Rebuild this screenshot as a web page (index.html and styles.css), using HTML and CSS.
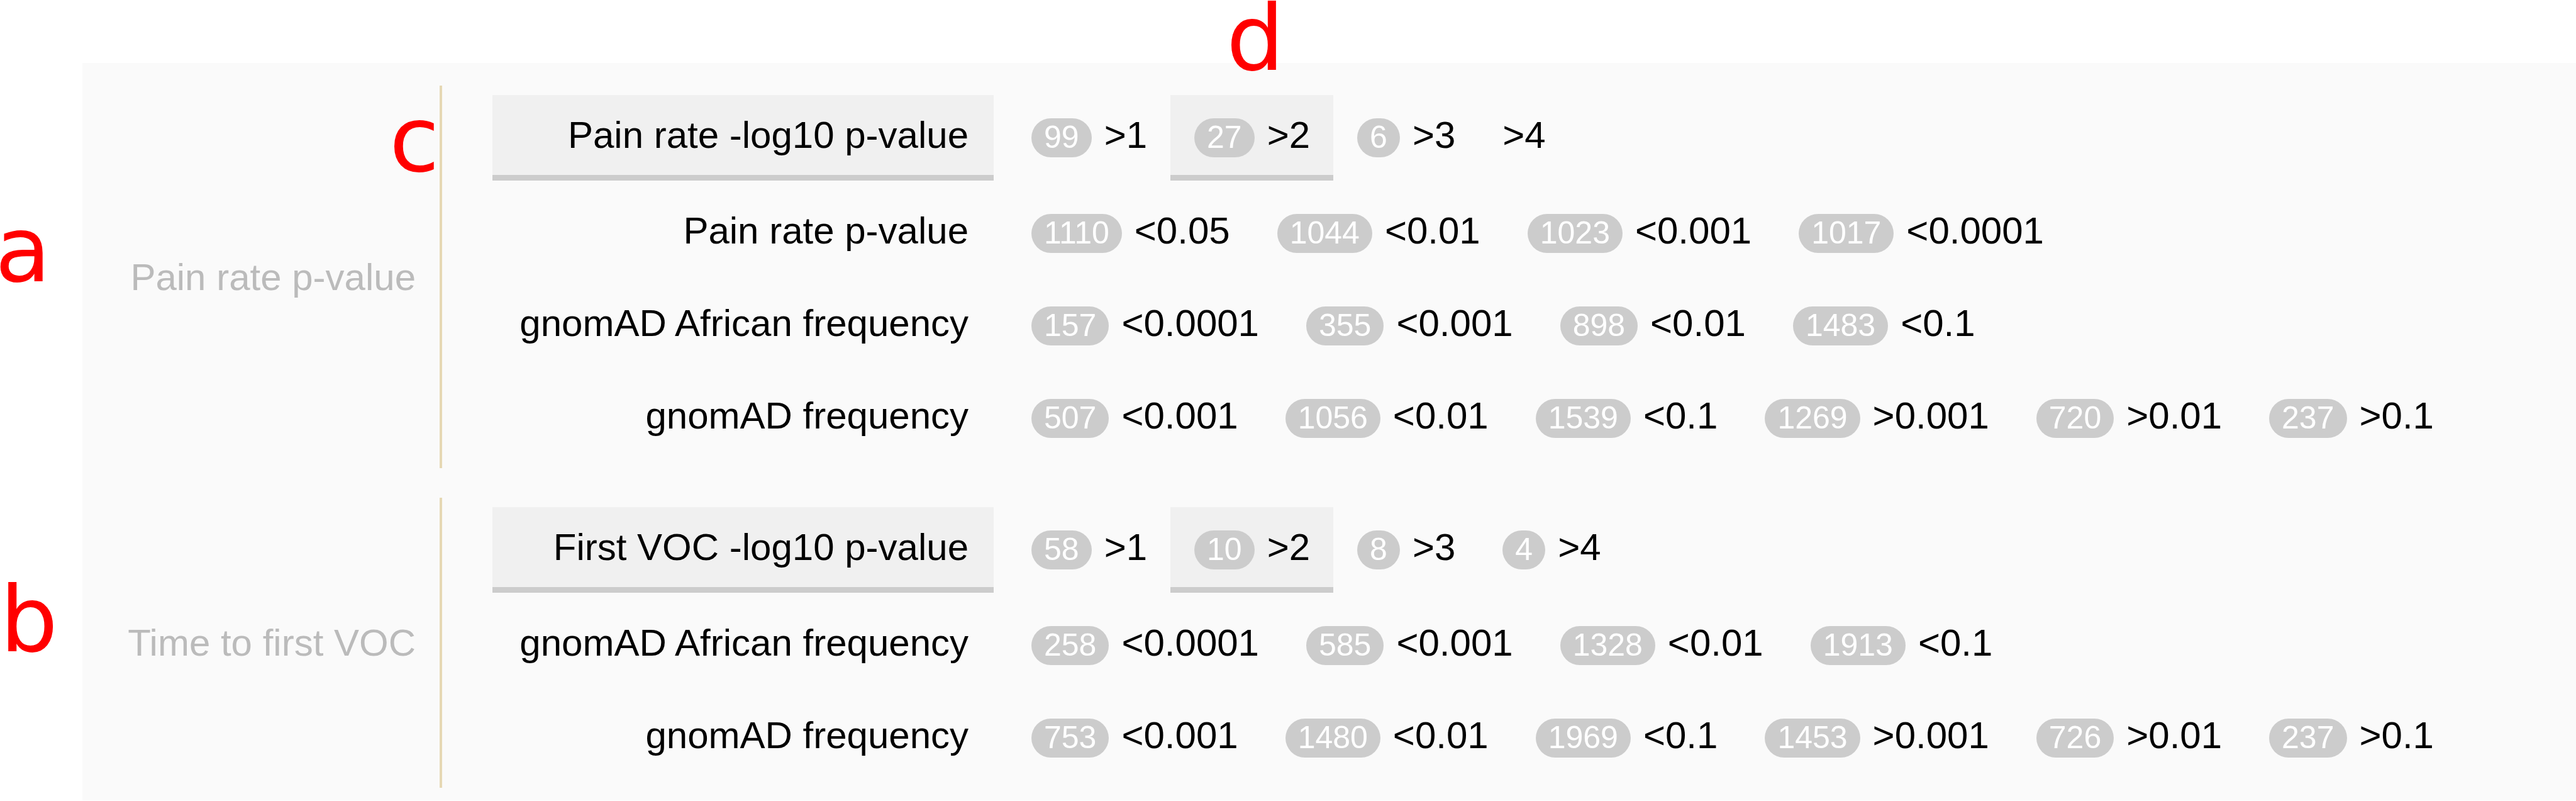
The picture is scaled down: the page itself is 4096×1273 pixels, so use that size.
FILE: index.html
```html
<!DOCTYPE html>
<html lang="en">
<head>
<meta charset="utf-8">
<title>Variant filters</title>
<link rel="stylesheet" href="styles.css">
</head>
<body>
<main class="panel">
  <section class="group">
    <h2 class="group-title">Pain rate p-value</h2>
    <div class="rows">
      <div class="row row-active">
        <span class="row-label">Pain rate -log10 p-value</span>
        <div class="chips">
          <button class="chip"><span class="count">99</span><span>&gt;1</span></button>
          <button class="chip chip-active" aria-pressed="true"><span class="count">27</span><span>&gt;2</span></button>
          <button class="chip"><span class="count">6</span><span>&gt;3</span></button>
          <button class="chip"><span>&gt;4</span></button>
        </div>
      </div>
      <div class="row">
        <span class="row-label">Pain rate p-value</span>
        <div class="chips">
          <button class="chip"><span class="count">1110</span><span>&lt;0.05</span></button>
          <button class="chip"><span class="count">1044</span><span>&lt;0.01</span></button>
          <button class="chip"><span class="count">1023</span><span>&lt;0.001</span></button>
          <button class="chip"><span class="count">1017</span><span>&lt;0.0001</span></button>
        </div>
      </div>
      <div class="row">
        <span class="row-label">gnomAD African frequency</span>
        <div class="chips">
          <button class="chip"><span class="count">157</span><span>&lt;0.0001</span></button>
          <button class="chip"><span class="count">355</span><span>&lt;0.001</span></button>
          <button class="chip"><span class="count">898</span><span>&lt;0.01</span></button>
          <button class="chip"><span class="count">1483</span><span>&lt;0.1</span></button>
        </div>
      </div>
      <div class="row">
        <span class="row-label">gnomAD frequency</span>
        <div class="chips">
          <button class="chip"><span class="count">507</span><span>&lt;0.001</span></button>
          <button class="chip"><span class="count">1056</span><span>&lt;0.01</span></button>
          <button class="chip"><span class="count">1539</span><span>&lt;0.1</span></button>
          <button class="chip"><span class="count">1269</span><span>&gt;0.001</span></button>
          <button class="chip"><span class="count">720</span><span>&gt;0.01</span></button>
          <button class="chip"><span class="count">237</span><span>&gt;0.1</span></button>
        </div>
      </div>
    </div>
  </section>
  <section class="group">
    <h2 class="group-title">Time to first VOC</h2>
    <div class="rows">
      <div class="row row-active">
        <span class="row-label">First VOC -log10 p-value</span>
        <div class="chips">
          <button class="chip"><span class="count">58</span><span>&gt;1</span></button>
          <button class="chip chip-active" aria-pressed="true"><span class="count">10</span><span>&gt;2</span></button>
          <button class="chip"><span class="count">8</span><span>&gt;3</span></button>
          <button class="chip"><span class="count">4</span><span>&gt;4</span></button>
        </div>
      </div>
      <div class="row">
        <span class="row-label">gnomAD African frequency</span>
        <div class="chips">
          <button class="chip"><span class="count">258</span><span>&lt;0.0001</span></button>
          <button class="chip"><span class="count">585</span><span>&lt;0.001</span></button>
          <button class="chip"><span class="count">1328</span><span>&lt;0.01</span></button>
          <button class="chip"><span class="count">1913</span><span>&lt;0.1</span></button>
        </div>
      </div>
      <div class="row">
        <span class="row-label">gnomAD frequency</span>
        <div class="chips">
          <button class="chip"><span class="count">753</span><span>&lt;0.001</span></button>
          <button class="chip"><span class="count">1480</span><span>&lt;0.01</span></button>
          <button class="chip"><span class="count">1969</span><span>&lt;0.1</span></button>
          <button class="chip"><span class="count">1453</span><span>&gt;0.001</span></button>
          <button class="chip"><span class="count">726</span><span>&gt;0.01</span></button>
          <button class="chip"><span class="count">237</span><span>&gt;0.1</span></button>
        </div>
      </div>
    </div>
  </section>
</main>
<span class="note note-a">a</span>
<span class="note note-b">b</span>
<span class="note note-c">c</span>
<span class="note note-d">d</span>
</body>
</html>
```
FILE: styles.css
```css
* {
  box-sizing: border-box;
}

body {
  margin: 0;
  position: relative;
  background: #fff;
  color: #000;
  font: 60px "Liberation Sans", Arial, sans-serif;
}

.panel {
  display: flex;
  flex-direction: column;
  gap: 47px;
  margin: 100px 0 0 131px;
  padding: 36px 0 20px;
  background: #fafafa;
}

.group {
  display: grid;
  grid-template-columns: 572px 1fr;
}

.group-title {
  display: flex;
  align-items: center;
  justify-content: flex-end;
  margin: 0;
  padding-right: 38px;
  border-right: 4px solid #e6d8b4;
  color: #bbb;
  font-size: 60px;
  font-weight: 400;
}

.rows {
  display: flex;
  flex-direction: column;
  gap: 11px;
  padding: 15px 0 11px 80px;
}

.row {
  display: grid;
  grid-template-columns: 797px 1fr;
  column-gap: 22px;
}

.row-active {
  margin-bottom: 5px;
}

.row-label {
  padding: 0 40px 0 38px;
  border-bottom: 9px solid transparent;
  line-height: 127px;
  text-align: right;
  white-space: nowrap;
}

.chips {
  display: flex;
}

.chip {
  display: flex;
  align-items: baseline;
  gap: 20px;
  margin: 0;
  padding: 0 37px 0 38px;
  border: 0;
  border-bottom: 9px solid transparent;
  background: none;
  color: inherit;
  font: inherit;
  line-height: 127px;
  white-space: nowrap;
}

.row-active .row-label,
.chip-active {
  border-bottom-color: #ccc;
  background: #f0f0f0;
}

.count {
  padding: 0 20px 2px;
  border-radius: 31px;
  background: #ccc;
  color: #fff;
  font-size: 50px;
  line-height: 60px;
}

/* Red letters that lie over the panel */
.note {
  position: absolute;
  color: #f00;
  font: 145px/120px "DejaVu Sans", sans-serif;
}

.note-a {
  left: -8px;
  top: 337px;
}

.note-b {
  left: 0;
  top: 925px;
}

.note-c {
  left: 619px;
  top: 162px;
}

.note-d {
  left: 1950px;
  top: 1px;
}
```
